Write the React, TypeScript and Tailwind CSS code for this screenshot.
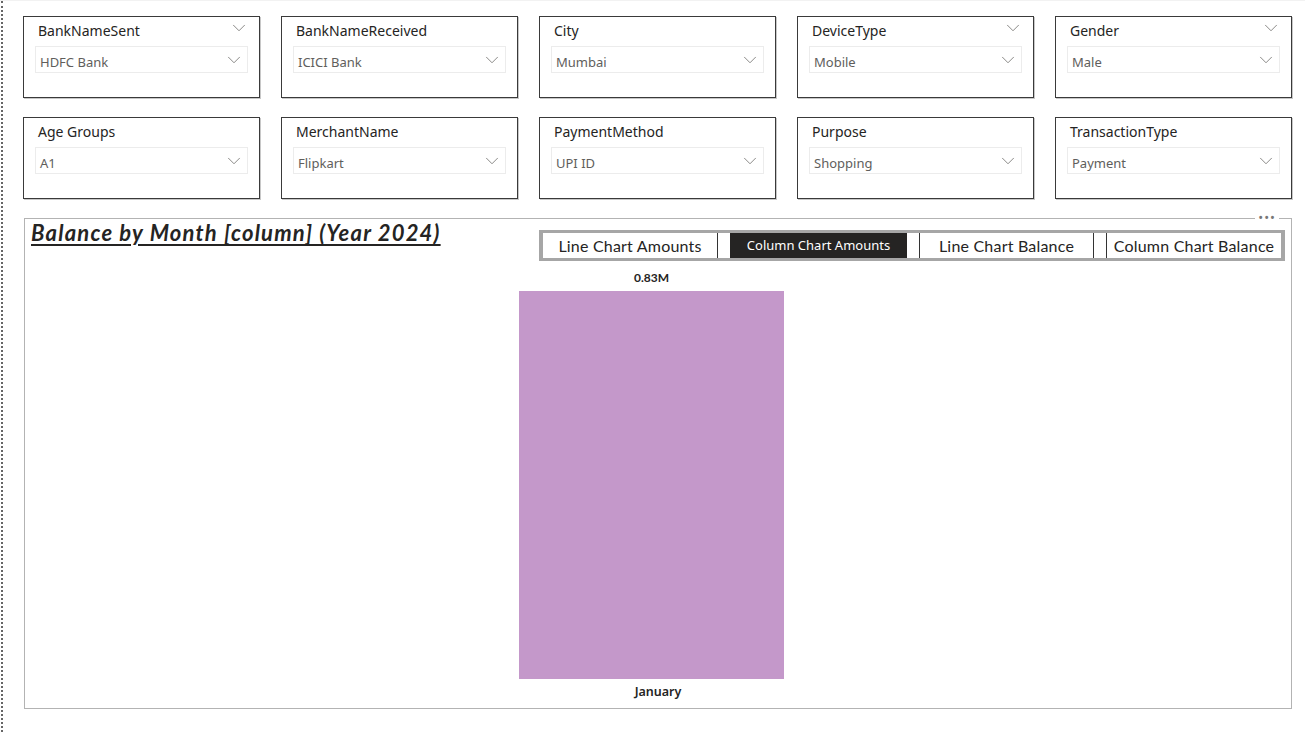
import { ChevronDown } from "lucide-react";

type Slicer = { title: string; value: string; headChevron?: boolean };

const rowOne: Slicer[] = [
  { title: "BankNameSent", value: "HDFC Bank", headChevron: true },
  { title: "BankNameReceived", value: "ICICI Bank" },
  { title: "City", value: "Mumbai" },
  { title: "DeviceType", value: "Mobile", headChevron: true },
  { title: "Gender", value: "Male", headChevron: true },
];

const rowTwo: Slicer[] = [
  { title: "Age Groups", value: "A1" },
  { title: "MerchantName", value: "Flipkart" },
  { title: "PaymentMethod", value: "UPI ID" },
  { title: "Purpose", value: "Shopping" },
  { title: "TransactionType", value: "Payment" },
];

function SlicerCard({ s }: { s: Slicer }) {
  return (
    <div className="w-[237px] h-[82px] border border-[#3a3a3a] shadow-[1px_1px_0_#c8c8c8] bg-white px-[11px] pt-[3px]">
      <div className="flex items-center justify-between h-[20px] pl-[3px] pr-[2px]">
        <span className="text-[14px] text-[#252423] font-['Noto_Sans',sans-serif]">
          {s.title}
        </span>
        {s.headChevron && (
          <ChevronDown size={22} strokeWidth={0.8} className="text-[#605e5c] -mt-[5px] -mr-[4px]" />
        )}
      </div>
      <div className="mt-[6px] h-[27px] border border-[#ececec] flex items-center justify-between pl-[4px] pr-[2px]">
        <span className="text-[13px] leading-[16px] mt-[4px] text-[#605e5c] font-['Noto_Sans',sans-serif]">
          {s.value}
        </span>
        <ChevronDown size={22} strokeWidth={0.8} className="text-[#605e5c]" />
      </div>
    </div>
  );
}

const buttons = [
  { label: "Line Chart Amounts", active: false, cls: "border-r border-[#333]" },
  { label: "Column Chart Amounts", active: true, cls: "" },
  { label: "Line Chart Balance", active: false, cls: "border-x border-[#333]" },
  { label: "Column Chart Balance", active: false, cls: "border-l border-[#333]" },
];

export default function App() {
  return (
    <div className="w-[1305px] h-[732px] bg-white overflow-hidden border-t border-[#f2f2f2]">
      <div className="ml-px h-full border-l-2 border-dotted border-[#666] pl-[20px] pt-[15px] font-['Noto_Sans',sans-serif]">
        <div className="flex gap-[21px]">
          {rowOne.map((s) => (
            <SlicerCard key={s.title} s={s} />
          ))}
        </div>
        <div className="flex gap-[21px] mt-[19px]">
          {rowTwo.map((s) => (
            <SlicerCard key={s.title} s={s} />
          ))}
        </div>

        <div className="relative ml-px mt-[19px] w-[1268px] h-[491px] border border-[#b3b3b3]">
          <div className="absolute -top-[9px] right-[12px] bg-white px-[3px] text-[13px] leading-[14px] text-[#777] tracking-[1px]">
            •••
          </div>
          <div className="flex items-start justify-between pl-[6px] pr-[6px]">
            <div className="text-[22px] leading-[28px] tracking-[1.2px] font-bold italic underline underline-offset-[3px] decoration-[1.5px] text-[#252423] font-['Lato',sans-serif]">
              Balance by Month [column] (Year 2024)
            </div>
            <div className="mt-[11px] flex gap-[12px] border-y-[3px] border-x-4 border-[#a6a6a6] bg-white h-[31px]">
              {buttons.map((b) =>
                b.active ? (
                  <div
                    key={b.label}
                    className="w-[177px] h-full flex items-center justify-center bg-[#252423] text-white text-[13px] font-['Noto_Sans',sans-serif]"
                  >
                    {b.label}
                  </div>
                ) : (
                  <div
                    key={b.label}
                    className={`w-[175px] h-full flex items-center justify-center bg-white text-[#252423] text-[16px] tracking-[0.2px] font-['Lato',sans-serif] ${b.cls}`}
                  >
                    {b.label}
                  </div>
                )
              )}
            </div>
          </div>

          <div className="ml-[494px] w-[265px] flex flex-col items-center mt-[10px]">
            <div className="text-[12px] leading-[14px] font-bold text-[#252423] font-['Lato',sans-serif]">
              0.83M
            </div>
            <div className="mt-[6px] w-[265px] h-[388px] bg-[#c498ca]" />
            <div className="mt-[5px] ml-[13px] text-[12.5px] leading-[16px] font-semibold text-[#252423] font-['Noto_Sans',sans-serif]">
              January
            </div>
          </div>
        </div>
      </div>
    </div>
  );
}
